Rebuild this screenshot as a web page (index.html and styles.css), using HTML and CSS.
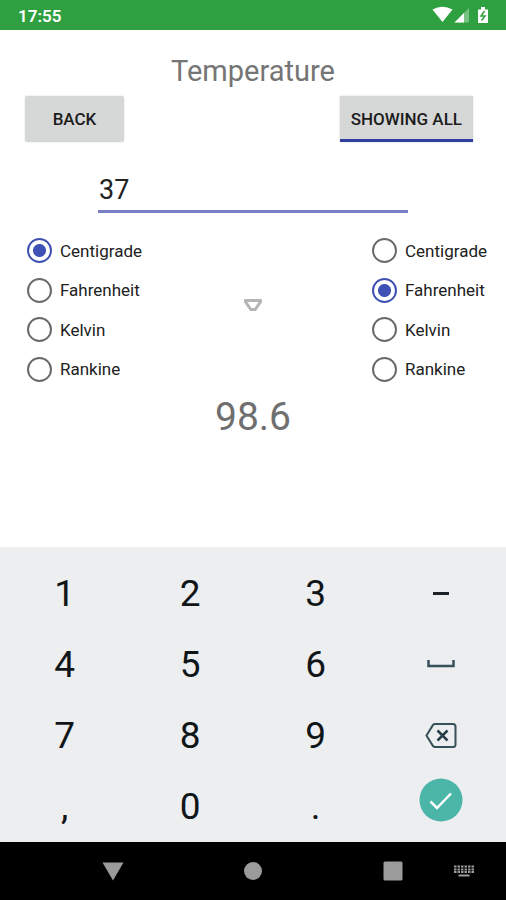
FILE: index.html
```html
<!DOCTYPE html>
<html lang="en">
<head>
<meta charset="utf-8">
<meta name="viewport" content="width=device-width, initial-scale=1">
<title>Temperature</title>
<link rel="stylesheet" href="styles.css">
</head>
<body>
<header class="status">
  <span class="clock">17:55</span>
  <svg class="status-icons" width="58" height="20" viewBox="0 0 58 20" aria-hidden="true">
    <path d="M.5 4.500Q10.500-1 20.500 4.500L10.500 17Z" fill="#fff"/>
    <path d="M22.500 17.500L37 3V17.500Z" fill="#fff" opacity=".35"/>
    <path d="M22.500 17.500L32 8V17.500Z" fill="#fff"/>
    <path d="M46 4.500H49V2H53V4.500H56V18H46Z" fill="#fff"/>
    <path d="M52.500 6L49 11H53L49.500 15.500" fill="none" stroke="#2fa03f" stroke-width="1.500"/>
  </svg>
</header>
<main class="content">
  <h1 class="title">Temperature</h1>
  <div class="actions">
    <button class="btn" type="button">BACK</button>
    <button class="btn btn-toggle" type="button" aria-pressed="true">SHOWING ALL</button>
  </div>
  <input class="amount" type="text" inputmode="decimal" value="37" aria-label="Value">
  <div class="units">
    <fieldset class="unit-list" aria-label="From">
      <label class="unit"><input type="radio" name="from" checked>Centigrade</label>
      <label class="unit"><input type="radio" name="from">Fahrenheit</label>
      <label class="unit"><input type="radio" name="from">Kelvin</label>
      <label class="unit"><input type="radio" name="from">Rankine</label>
    </fieldset>
    <svg class="arrow" width="20" height="14" viewBox="0 0 20 14" aria-hidden="true">
      <path d="M2 2H18V4L12.500 12H7.500L2 4Z" fill="#b5b5b5" stroke="#b5b5b5" stroke-width="2" stroke-linejoin="round"/>
      <path d="M4.500 4H15.500L11.500 10H8.500Z" fill="#fff"/>
    </svg>
    <fieldset class="unit-list" aria-label="To">
      <label class="unit"><input type="radio" name="to">Centigrade</label>
      <label class="unit"><input type="radio" name="to" checked>Fahrenheit</label>
      <label class="unit"><input type="radio" name="to">Kelvin</label>
      <label class="unit"><input type="radio" name="to">Rankine</label>
    </fieldset>
  </div>
  <output class="result">98.6</output>
</main>
<section class="keyboard" aria-label="Keyboard">
  <button class="key" type="button">1</button>
  <button class="key" type="button">2</button>
  <button class="key" type="button">3</button>
  <button class="key" type="button" aria-label="Minus"><svg width="32" height="28" viewBox="0 0 32 28"><path d="M8 13.500H24" stroke="#1c2226" stroke-width="3"/></svg></button>
  <button class="key" type="button">4</button>
  <button class="key" type="button">5</button>
  <button class="key" type="button">6</button>
  <button class="key" type="button" aria-label="Space"><svg width="32" height="28" viewBox="0 0 32 28"><path d="M3.500 9V15H28.500V9" fill="none" stroke="#36505a" stroke-width="2.500"/></svg></button>
  <button class="key" type="button">7</button>
  <button class="key" type="button">8</button>
  <button class="key" type="button">9</button>
  <button class="key" type="button" aria-label="Delete"><svg width="32" height="28" viewBox="0 0 32 28"><path d="M10 2H28Q30.500 2 30.500 4.500V22.500Q30.500 25 28 25H10Q9 25 8 24L1.500 13.500L8 3Q9 2 10 2Z" fill="none" stroke="#36505a" stroke-width="2"/><path d="M12.500 8.500L22.500 18.500M22.500 8.500L12.500 18.500" stroke="#263f49" stroke-width="2.500"/></svg></button>
  <button class="key" type="button">,</button>
  <button class="key" type="button">0</button>
  <button class="key" type="button">.</button>
  <button class="key key-enter" type="button" aria-label="Done"><svg width="44" height="44" viewBox="0 0 44 44"><circle cx="22" cy="22" r="21.500" fill="#4bb5a8"/><path d="M11.500 23.500L18 30L32 15.500" fill="none" stroke="#fff" stroke-width="2.500"/></svg></button>
</section>
<nav class="navbar">
  <button class="nav-btn nav-back" type="button" aria-label="Back"><svg width="22" height="20" viewBox="0 0 22 20"><path d="M.5 1.500H21.500L11 19.500Z" fill="#9b9b9b"/></svg></button>
  <button class="nav-btn nav-home" type="button" aria-label="Home"><svg width="20" height="20" viewBox="0 0 20 20"><circle cx="10" cy="10" r="9" fill="#9b9b9b"/></svg></button>
  <button class="nav-btn nav-recents" type="button" aria-label="Recents"><svg width="20" height="20" viewBox="0 0 20 20"><rect x=".5" y=".5" width="19" height="19" rx="1.500" fill="#9b9b9b"/></svg></button>
  <button class="nav-btn nav-ime" type="button" aria-label="Switch keyboard"><svg width="20" height="12" viewBox="0 0 20 12"><path d="M0 1.500H20M0 4.500H20M0 7H20" stroke="#9b9b9b" stroke-width="1.800" stroke-dasharray="2.500 1"/><path d="M4.500 10.500H15.500" stroke="#9b9b9b" stroke-width="2"/></svg></button>
</nav>
</body>
</html>
```
FILE: styles.css
```css
* { box-sizing: border-box; }

body {
  margin: 0;
  min-height: 100vh;
  display: flex;
  flex-direction: column;
  background: #fff;
  color: #212121;
  font-family: Roboto, "Liberation Sans", sans-serif;
}

button, input { font-family: inherit; }
button { border: 0; padding: 0; background: none; }
svg { display: block; }

.status {
  display: flex;
  align-items: center;
  justify-content: space-between;
  height: 30px;
  padding: 2px 16px 0 18px;
  background: #2fa03f;
  color: #fff;
}
.clock { font-size: 17px; font-weight: 600; line-height: 28px; }
.status-icons { margin-bottom: 2px; }

.content {
  flex: 1;
  display: flex;
  flex-direction: column;
}

.title {
  margin: 23px 0 7px;
  font-size: 29px;
  font-weight: 400;
  line-height: 36px;
  text-align: center;
  color: #757575;
}

.actions {
  display: flex;
  justify-content: space-between;
  padding: 0 33px 0 25px;
}
.btn {
  min-width: 99px;
  height: 46px;
  padding: 0 11px;
  border-radius: 2px;
  background: #d6d7d7;
  box-shadow: 0 0 2px #d6d7d7;
  color: #1c1c1c;
  font-size: 17px;
  font-weight: 500;
}
.btn-toggle {
  border-top: 3px solid #d6d7d7;
  border-bottom: 3px solid #303f9f;
  border-radius: 0;
}

.amount {
  width: 310px;
  max-width: 100%;
  height: 46px;
  margin: 25px auto 0;
  padding: 3px 0 0 1px;
  border: 0;
  border-bottom: 3px solid #7a80c8;
  background: none;
  outline: none;
  color: #212121;
  font-size: 27px;
}

.units {
  display: grid;
  grid-template-columns: 1fr auto 1fr;
  align-items: center;
  height: 158px;
  margin: 18px 19px 0;
}
.unit-list {
  display: grid;
  grid-template-rows: repeat(4, 1fr);
  justify-self: start;
  height: 158px;
  margin: 0 0 0 8px;
  padding: 0;
  border: 0;
}
.unit-list:last-child { justify-self: end; }
.unit {
  display: flex;
  align-items: center;
  gap: 8px;
  font-size: 17px;
  line-height: 24px;
}
.unit input {
  appearance: none;
  width: 25px;
  height: 25px;
  margin: 0;
  border: 2px solid #6a6a6a;
  border-radius: 50%;
  background: #fff;
}
.unit input:checked {
  border-color: #3f51b5;
  background: radial-gradient(circle, #3f51b5 6px, #fff 7px);
}
.arrow { margin-top: -10px; }

.result {
  margin-top: 4px;
  font-size: 39px;
  line-height: 48px;
  text-align: center;
  color: #6f6f6f;
}

.keyboard {
  display: grid;
  grid-template-columns: repeat(4, 1fr);
  grid-auto-rows: 71px;
  padding: 11px 2px 0;
  background: #eceef0;
}
.key {
  display: flex;
  align-items: center;
  justify-content: center;
  color: #101518;
  font-size: 37px;
  line-height: 44px;
}
.key-enter { padding-bottom: 14px; }

.navbar {
  display: grid;
  grid-template-columns: 78fr 70fr 70fr 70fr 70fr 70fr 71fr 7fr;
  height: 58px;
  background: #000;
}
.nav-btn {
  display: flex;
  align-items: center;
  justify-content: center;
}
.nav-back { grid-column: 2; }
.nav-home { grid-column: 4; }
.nav-recents { grid-column: 6; }
.nav-ime { grid-column: 7; }
```
